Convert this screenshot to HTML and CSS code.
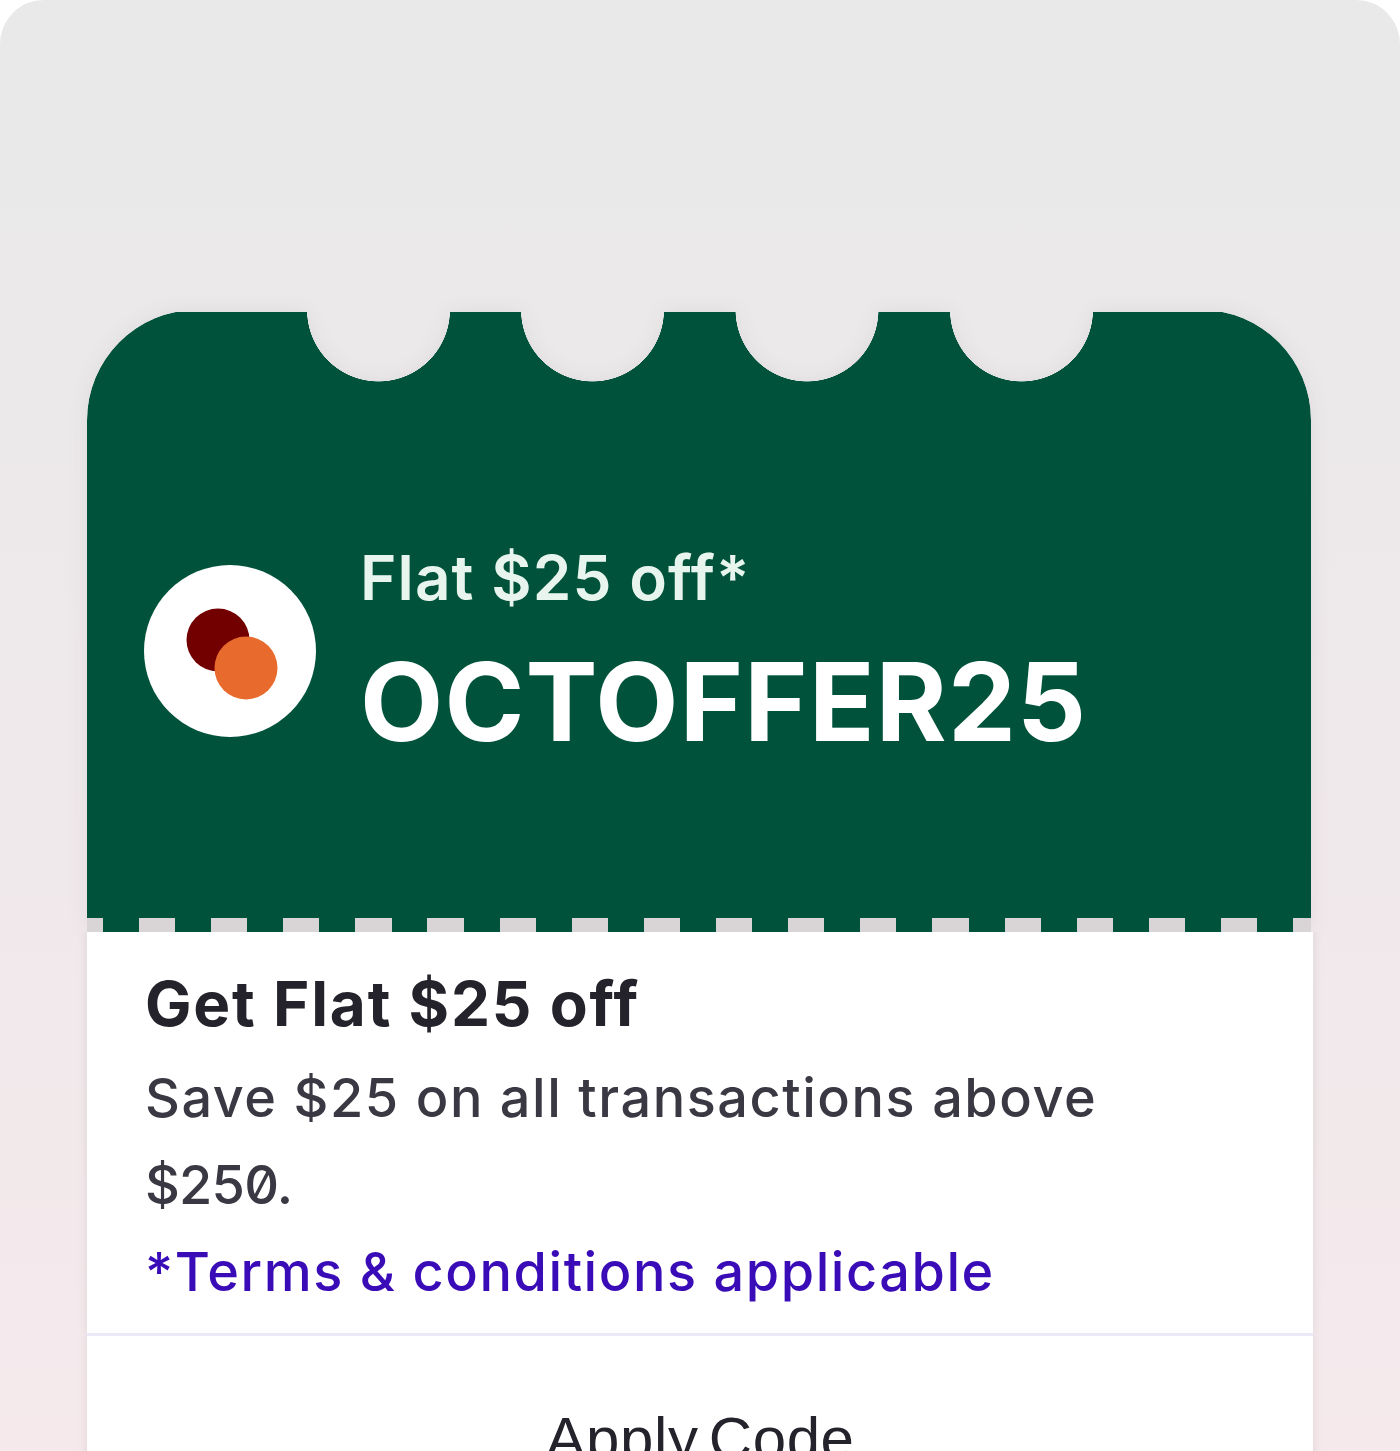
FILE: index.html

```html
<!DOCTYPE html>
<html lang="en">
<head>
  <meta charset="UTF-8" />
  <meta name="viewport" content="width=device-width, initial-scale=1.0"/>
  <title>Coupon</title>
  <link rel="stylesheet" href="styles.css">
</head>
<body>
  <div class="screen">
    <div class="coupon">

      <!-- Green ticket part -->
      <div class="ticket-wrap">
        <div class="ticket">
          <div class="ticket-main">
            <div class="logo">
              <svg width="172" height="172" viewBox="0 0 172 172">
                <circle cx="74" cy="75" r="31.5" fill="#720000"/>
                <circle cx="102" cy="103" r="31.5" fill="#e86a2d"/>
              </svg>
            </div>
            <div class="offer">
              <div class="offer-label">Flat $25 off*</div>
              <div class="offer-code">OCTOFFER25</div>
            </div>
          </div>
          <div class="teeth"></div>
        </div>
      </div>

      <!-- Details -->
      <div class="details">
        <h1>Get Flat $25 off</h1>
        <p class="desc">Save $25 on all transactions above <span class="amount">$250.</span></p>
        <p class="terms">*Terms &amp; conditions applicable</p>
      </div>
      <button class="apply">Apply Code</button>
    </div>
  </div>
</body>
</html>
```

FILE: styles.css

```css
html, body {
  margin: 0;
  height: 100%;
  background: #fff;
}
body {
  font-family: Inter, 'Noto Sans', sans-serif;
  overflow: hidden;
}
.screen {
  height: 1451px;
  box-sizing: border-box;
  padding: 310px 87px 0;
  border-radius: 44px 44px 0 0;
  background: linear-gradient(180deg, #e9e9e9 0%, #ebe9ea 22%, #f5e9ec 100%);
  overflow: hidden;
}
.coupon {
  width: 1226px;
}
.ticket-wrap {
  width: 1224px;
  filter: drop-shadow(0 0 10px rgba(60, 40, 50, 0.07));
}
/* top 2px is cut off, so the corners and notches meet the edge at an angle */
.ticket {
  border-radius: 110px 110px 0 0;
  overflow: hidden;
  clip-path: inset(2px 0 0 0);
  -webkit-mask-image:
    radial-gradient(circle at 291.5px 0, transparent 71.25px, #000 71.75px),
    radial-gradient(circle at 505.5px 0, transparent 71.25px, #000 71.75px),
    radial-gradient(circle at 720px 0, transparent 71.25px, #000 71.75px),
    radial-gradient(circle at 934.5px 0, transparent 71.25px, #000 71.75px);
  mask-image:
    radial-gradient(circle at 291.5px 0, transparent 71.25px, #000 71.75px),
    radial-gradient(circle at 505.5px 0, transparent 71.25px, #000 71.75px),
    radial-gradient(circle at 720px 0, transparent 71.25px, #000 71.75px),
    radial-gradient(circle at 934.5px 0, transparent 71.25px, #000 71.75px);
  -webkit-mask-composite: source-in;
  mask-composite: intersect;
}
.ticket-main {
  height: 608px;
  box-sizing: border-box;
  padding: 74px 0 0 57px;
  display: flex;
  align-items: center;
  gap: 44px;
  background: #00533a;
}
.logo {
  width: 172px;
  height: 172px;
  border-radius: 50%;
  background: #fff;
  flex-shrink: 0;
}
.logo svg {
  display: block;
}
.offer {
  margin-top: 7px;
}
.offer-label {
  font-size: 62px;
  font-weight: 600;
  line-height: 72px;
  letter-spacing: 1.1px;
  color: #e8f5ee;
}
.offer-code {
  margin-top: 23px;
  font-size: 108px;
  font-weight: 700;
  line-height: 130px;
  letter-spacing: 1.2px;
  color: #fff;
}
.teeth {
  height: 14px;
  background: repeating-linear-gradient(90deg,
    #d9d4d5 0, #d9d4d5 16px,
    #00533a 16px, #00533a 52px,
    #d9d4d5 52px, #d9d4d5 72.125px);
}
.details {
  background: #fff;
  padding: 32px 58px 18px;
  border-bottom: 3px solid #ebe8f7;
  box-shadow: 0 0 10px rgba(60, 40, 50, 0.1);
  clip-path: inset(0 -20px -3px -20px);
}
.details h1 {
  margin: 0;
  font-size: 62px;
  font-weight: 700;
  line-height: 80px;
  letter-spacing: 1.8px;
  color: #24222a;
}
.desc {
  margin: 10px 0 0;
  font-size: 54px;
  font-weight: 500;
  line-height: 87px;
  letter-spacing: 1.55px;
  color: #3a3842;
  max-width: 1000px;
}
.amount {
  font-feature-settings: "zero" 1;
  letter-spacing: -0.8px;
}
.terms {
  margin: 0;
  font-size: 54px;
  font-weight: 500;
  line-height: 87px;
  letter-spacing: 1.56px;
  color: #3a0cb8;
}
.apply {
  display: block;
  width: 100%;
  border: none;
  background: #fff;
  padding: 71px 0;
  font-family: 'Liberation Sans', Arial, sans-serif;
  font-size: 60px;
  line-height: 64px;
  letter-spacing: 0.6px;
  word-spacing: -7px;
  color: #24222a;
  box-shadow: 0 0 10px rgba(60, 40, 50, 0.1);
  clip-path: inset(0 -20px);
}
```
